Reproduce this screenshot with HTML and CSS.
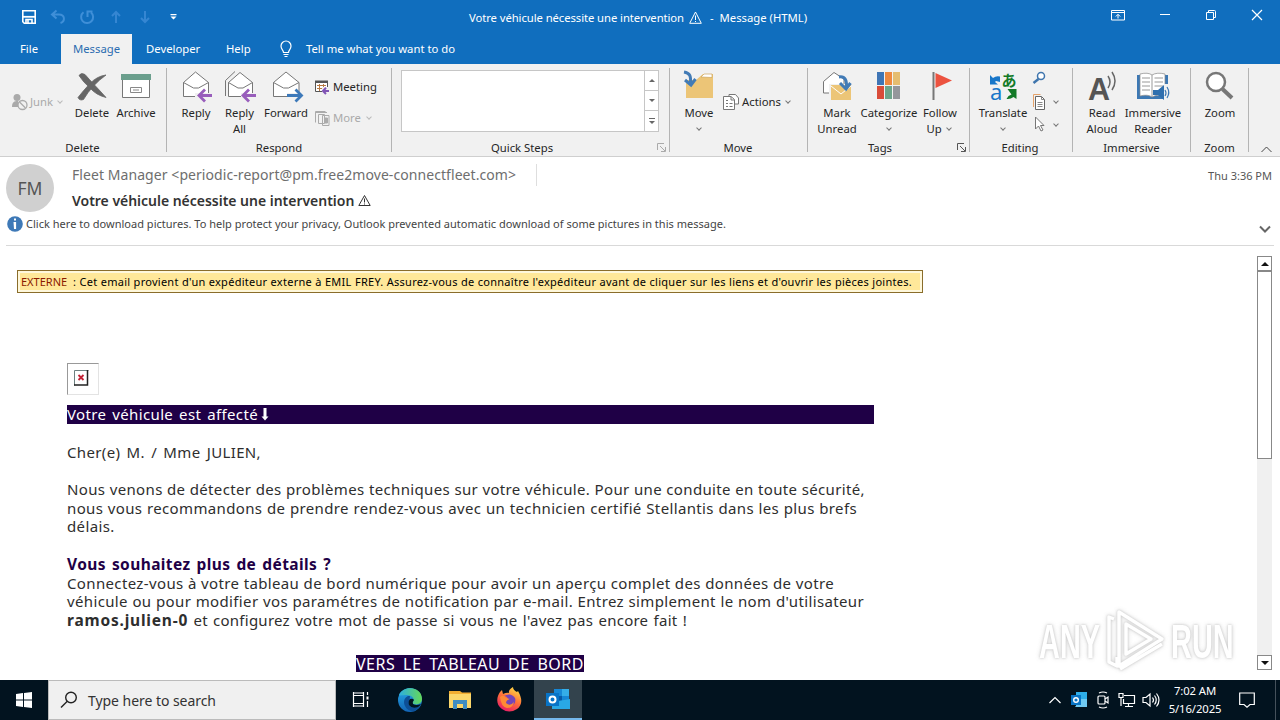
FILE: index.html
```html
<!DOCTYPE html>
<html lang="fr">
<head>
<meta charset="utf-8">
<title>Votre véhicule nécessite une intervention - Message (HTML)</title>
<link rel="stylesheet" href="styles.css">
</head>
<body>
<div class="window">
  <header class="titlebar">
    <div class="quick">
      <svg width="16" height="16" viewBox="0 0 16 16" fill="none" stroke="#fff" stroke-width="1.6"><path d="M1.8 1.800h12.400v12.400H3.300L1.800 12.700z"/><path d="M2 7.800h12" stroke-width="1.800"/><path d="M5 14v-3.500h6V14M7 11v3"/></svg>
      <svg width="16" height="16" viewBox="0 0 16 16" fill="none" stroke="#3f8fd8" stroke-width="2"><path d="M6.500 1.500L2 5.500l4.500 4M2.500 5.500H9c6 0 6.500 7 1.500 8.500"/></svg>
      <svg width="16" height="16" viewBox="0 0 16 16" fill="none" stroke="#3f8fd8" stroke-width="2"><path d="M4.500 3.300A6 6 0 1 0 12 3.500M8.500 8V2.500h5"/></svg>
      <svg width="16" height="16" viewBox="0 0 16 16" fill="none" stroke="#3586d2" stroke-width="2"><path d="M8 14V3M4 7l4-4 4 4"/></svg>
      <svg width="16" height="16" viewBox="0 0 16 16" fill="none" stroke="#3586d2" stroke-width="2"><path d="M8 2v11M4 9l4 4 4-4"/></svg>
      <svg width="16" height="16" viewBox="0 0 16 16" fill="#fff"><path d="M4.500 5h6v1.200h-6zM4.500 7.500h6l-3 3z"/></svg>
    </div>
    <div class="title"><span>Votre véhicule nécessite une intervention</span><svg width="13" height="13" viewBox="0 0 13 13" fill="none" stroke="#fff"><path d="M6.500 1L12.300 12.300H.7zM6.500 4.500v4.500M6.500 10v1"/></svg><span>-&nbsp; Message (HTML)</span></div>
    <div class="controls">
      <svg width="14" height="12" viewBox="0 0 14 12" fill="none" stroke="#fff"><path d="M.5 1.500h13v9.500H.5zM.5 3.500h13M7 9.500V5.500M4.800 7.500L7 5.300l2.200 2.200"/></svg>
      <svg width="12" height="12" viewBox="0 0 12 12" stroke="#fff"><path d="M1 5.500h10"/></svg>
      <svg width="12" height="12" viewBox="0 0 12 12" fill="none" stroke="#fff"><path d="M1.500 3.500h7v7h-7zM3.500 3V1.500H9.500q1 0 1 1V8.500H9"/></svg>
      <svg width="12" height="12" viewBox="0 0 12 12" stroke="#fff" stroke-width="1.200"><path d="M1 1l10 10M11 1L1 11"/></svg>
    </div>
  </header>
  <nav class="tabs">
    <a class="file">File</a><a class="active">Message</a><a class="dev">Developer</a><a class="help">Help</a>
    <svg width="14" height="18" viewBox="0 0 14 18" fill="none" stroke="#fff" stroke-width="1.200"><path d="M4.500 12.500c0-2.500-2.500-3-2.500-6.500a5 5 0 0 1 10 0c0 3.500-2.500 4-2.500 6.500zM4.500 14.500h5M5.500 16.500h3"/></svg>
    <a class="tell">Tell me what you want to do</a>
  </nav>

  <section class="ribbon">
    <div class="group g-delete">
      <div class="tools">
        <div class="row junk"><svg width="17" height="18" viewBox="0 0 17 18"><circle cx="6" cy="4.500" r="3.500" fill="#aaa"/><path d="M1 14c0-5 2-6 6-6v6z" fill="#aaa"/><circle cx="11.500" cy="12" r="4.500" fill="#f1f1f1" stroke="#aaa" stroke-width="1.300"/><path d="M8.500 9l6 6" stroke="#aaa" stroke-width="1.300"/></svg><span>Junk</span><i class="caret"></i></div>
        <div class="big w44"><svg width="30" height="30" viewBox="0 0 30 30" fill="#666"><path d="M2 3.500Q4 0 8 2.500c6 7 13 14 21 23Q19 23 13 16 6 10 2 3.500z" stroke="#666" stroke-width=".8"/><path d="M29 3Q20 4 12.500 12 6 19 1 25.500q1.500 3.500 5.500 2Q15 13 29 3z" stroke="#666" stroke-width=".8"/></svg><span>Delete</span></div>
        <div class="big w44"><svg width="30" height="30" viewBox="0 0 30 30"><path d="M1.500 8v17.500h27V8" fill="#fff" stroke="#777"/><path d="M0 2h30v6H0z" fill="#6b9f8d"/><path d="M9.500 15.500h11v5h-11zM12 18h6" fill="none" stroke="#888"/></svg><span>Archive</span></div>
      </div>
      <div class="label">Delete</div>
    </div>
    <div class="group g-respond">
      <div class="tools">
        <div class="big w44"><svg width="30" height="30" viewBox="0 0 30 30" fill="none"><path d="M2.500 10.500L14.500 0 27.500 10.500V24.500h-25z" fill="#fff" stroke="#777"/><path d="M2.500 10.500l10 5.500h5l10-5.500" stroke="#777"/><path d="M14 21h18v9H14z" fill="#f1f1f1"/><path d="M31 23.500H18M24 17.500l-6 6 6 6" stroke="#985dbb" stroke-width="2.800"/></svg><span>Reply</span></div>
        <div class="big w43"><svg width="32" height="30" viewBox="0 0 32 30" fill="none"><path d="M1.500 24V8.500L11 -.5" stroke="#777"/><path d="M4.500 10.500L16 .5l12.500 10V24.500h-24z" fill="#fff" stroke="#777"/><path d="M4.500 10.500l9.500 5.500h5l9.500-5.500" stroke="#777"/><path d="M17 21h15v9H17z" fill="#f1f1f1"/><path d="M32 23.500H19M25 17.500l-6 6 6 6" stroke="#985dbb" stroke-width="2.800"/></svg><span>Reply<br>All</span></div>
        <div class="big w50"><svg width="30" height="30" viewBox="0 0 30 30" fill="none"><path d="M2.500 10.500L15 0 28 10.500V24.500H2.500z" fill="#fff" stroke="#777"/><path d="M2.500 10.500l10 5.500h5L28 10.500" stroke="#777"/><path d="M16 21h15v9H16z" fill="#f1f1f1"/><path d="M16 23.500h14M24.500 17.500l6 6-6 6" stroke="#3d79b9" stroke-width="2.800"/></svg><span>Forward</span></div>
        <div class="stack meet">
          <div class="row"><svg width="16" height="16" viewBox="0 0 16 16" fill="none"><path d="M1.500 2.500h12v10h-12z" stroke="#555" fill="#fff"/><path d="M1 1.500h13v2.500H1z" fill="#555"/><path d="M3 6.500h9M3 9.500h6M5.500 5v7M9.500 5v4" stroke="#b97a43"/><path d="M8 8h8v8H8z" fill="#f1f1f1"/><path d="M15 12H9M12 8.800L9 12l3 3" stroke="#8054b5" stroke-width="2"/></svg><span>Meeting</span></div>
          <div class="row gray"><svg width="16" height="16" viewBox="0 0 16 16" fill="none" stroke="#aaa"><path d="M1.500 12.500v-11h10M1 2.500h12"/><path d="M4.500 4.500h6v9h-6zM8.500 5.500h6.500v10H8.500z" fill="#f1f1f1"/><path d="M10.500 8h3v5h-3z" fill="#aaa"/></svg><span>More</span><i class="caret"></i></div>
        </div>
      </div>
      <div class="label">Respond</div>
    </div>
    <div class="group g-quick">
      <div class="gallery"><div class="canvas"></div><div class="spin"><i class="up"></i><i class="down"></i><i class="down bar"></i></div></div>
      <div class="label">Quick Steps</div>
      <svg class="launch" width="9" height="9" viewBox="0 0 9 9" fill="none" stroke="#aaa"><path d="M.5 7V.5H7M3 3l5 5M8.500 4v4.500H4"/></svg>
    </div>
    <div class="group g-move">
      <div class="tools">
        <div class="big w50"><svg width="32" height="30" viewBox="0 0 32 30"><path d="M3 8h10l7-6h10v24H3z" fill="#ecc577"/><path d="M18 5l3-3h8v3.500z" fill="#fff" stroke="#cba55c" stroke-width=".7"/><path d="M1 0c6 1 7 4 6.500 11M2 8l6 5 4.500-6" fill="none" stroke="#427bb6" stroke-width="3"/></svg><span>Move<br><i class="caret"></i></span></div>
        <div class="row act"><svg width="17" height="16" viewBox="0 0 17 16" fill="none" stroke="#777"><path d="M6 2V.5h6.500L15.500 4v6H12" fill="#fff"/><path d="M.5 2.500H8l3.500 3V15.500H.5z" fill="#fff"/><path d="M3 6.500h2M3 9.500h2M3 12.500h2M6.500 9.500h3M6.500 12.500h3" /><path d="M8 3v3h3"/></svg><span>Actions</span><i class="caret"></i></div>
      </div>
      <div class="label">Move</div>
    </div>
    <div class="group g-tags">
      <div class="tools">
        <div class="big w50"><svg width="30" height="30" viewBox="0 0 30 30" fill="none"><path d="M1.500 21V9.500L12 .5l10 6.500v14z" fill="#fff" stroke="#777"/><path d="M7 12h20v10H7z" fill="#f1f1f1"/><path d="M9 13h20v15H9z" fill="#ecc577"/><path d="M9 14l10 8 10-8" stroke="#fff"/><path d="M17 5c6-1 8 3 7.500 11M18 11l6 6 4.500-6" stroke="#427bb6" stroke-width="3"/></svg><span>Mark<br>Unread</span></div>
        <div class="big w54"><svg width="30" height="30" viewBox="0 0 30 30"><path d="M3 0h7v13H3z" fill="#3f75b5"/><path d="M11 0h7v13h-7z" fill="#ee893f"/><path d="M19 0h7v13h-7z" fill="#e5bd70"/><path d="M3 14h7v13H3z" fill="#d94c39"/><path d="M11 14h7v13h-7z" fill="#6da58b"/><path d="M19 14h7v13h-7z" fill="#94969b"/></svg><span>Categorize<br><i class="caret"></i></span></div>
        <div class="big w48"><svg width="30" height="30" viewBox="0 0 30 30"><path d="M7.500 0h2v28h-2z" fill="#777"/><path d="M10.500 1L27 8.500 10.500 16z" fill="#ec5340"/></svg><span>Follow<br>Up <i class="caret"></i></span></div>
      </div>
      <div class="label">Tags</div>
      <svg class="launch" width="9" height="9" viewBox="0 0 9 9" fill="none" stroke="#555"><path d="M.5 7V.5H7M3 3l5 5M8.500 4v4.500H4"/></svg>
    </div>
    <div class="group g-edit">
      <div class="tools">
        <div class="big w58"><svg width="30" height="30" viewBox="0 0 30 30"><path d="M2 3l3 3q3-2.500 7-1.500v5.500l-4-1-1 1 3 2.500H2z" fill="#1876c9"/><path d="M28.500 17v10l-3-2q-3 2.500-7 2l2-3 3-1.500-4-5.500z" fill="#137a27"/><text x="2" y="27.500" class="lat">a</text><text x="13.500" y="14" class="kana">あ</text></svg><span>Translate<br><i class="caret"></i></span></div>
        <div class="stack edit">
          <div class="row"><svg width="16" height="16" viewBox="0 0 16 16" fill="none" stroke="#3f75ad"><circle cx="9" cy="5" r="3.500" fill="#fff" stroke-width="1.500"/><path d="M6.500 8l-5 4" stroke-width="2.500"/></svg></div>
          <div class="row"><svg width="16" height="16" viewBox="0 0 16 16" fill="none"><path d="M1.500 13V.5h7" stroke="#e6a36a"/><path d="M3.500 2.500h6l3 3v10h-9z" fill="#fff" stroke="#666"/><path d="M9.500 2.500v3h3M5.500 8.500h5M5.500 10.500h5M5.500 12.500h5" stroke="#888"/></svg><i class="caret"></i></div>
          <div class="row"><svg width="16" height="16" viewBox="0 0 16 16" fill="#fff" stroke="#777"><path d="M3.500 0v12l3-3 2.500 5 2-1-2.500-4.500h3.500z"/></svg><i class="caret"></i></div>
        </div>
      </div>
      <div class="label">Editing</div>
    </div>
    <div class="group g-imm">
      <div class="tools">
        <div class="big w44"><svg width="30" height="30" viewBox="0 0 30 30" fill="none" stroke="#666"><text x="1" y="27.500" class="bigA" textLength="22" lengthAdjust="spacingAndGlyphs">A</text><path d="M21 4q4 6 0 12" stroke-width="1.500"/><path d="M25 0q6 9 0 18" stroke-width="1.500"/></svg><span>Read<br>Aloud</span></div>
        <div class="big w58"><svg width="34" height="30" viewBox="0 0 34 30" fill="none"><path d="M1 3h31v24H1z" fill="#3c78b4"/><path d="M4 2q8-2 12 1 5-3 13-1v22q-8-2-13 1-4-3-12-1z" fill="#fff" stroke="#888" stroke-width=".7"/><path d="M16 3v22M6 6h8M6 10h8M6 14h8M6 18h8M18.500 6H27M18.500 10H27M18.500 14H27" stroke="#999"/><path d="M28 12h6v17h-6z" fill="#f1f1f1"/><path d="M17 18h5l6-5v15l-6-5h-5z" fill="#2f6fae"/><path d="M29 18q2 3 0 6M31 15q3.500 5.500 0 11" stroke="#3c78b4" stroke-width="1.200"/></svg><span>Immersive<br>Reader</span></div>
      </div>
      <div class="label">Immersive</div>
    </div>
    <div class="group g-zoom">
      <div class="tools"><div class="big w44"><svg width="30" height="30" viewBox="0 0 30 30" fill="none" stroke="#777"><circle cx="11" cy="10" r="9" fill="#fff" stroke-width="2.500"/><path d="M17.500 17l9.500 9" stroke-width="4"/></svg><span>Zoom</span></div></div>
      <div class="label">Zoom</div>
    </div>
    <div class="collapse"><svg width="11" height="7" viewBox="0 0 11 7" fill="none" stroke="#444"><path d="M.5 6L5.500 1l5 5"/></svg></div>
  </section>

  <section class="head">
    <div class="sender">
      <div class="avatar">FM</div>
      <div class="who">
        <div class="from"><span>Fleet Manager &lt;periodic-report@pm.free2move-connectfleet.com&gt;</span><i></i></div>
        <div class="subject"><span>Votre véhicule nécessite une intervention</span><svg width="13" height="13" viewBox="0 0 13 13" fill="none" stroke="#333"><path d="M6.500 1.500L12.200 11.500H.8zM6.500 4.500V8.500M6.500 9.500v1"/></svg></div>
      </div>
      <div class="time">Thu 3:36 PM</div>
    </div>
    <div class="info">
      <svg width="16" height="16" viewBox="0 0 16 16"><circle cx="8" cy="8" r="7.800" fill="#3e79b7"/><path d="M7 2.500h2v2H7zM6.500 6h2.600v7H7z" fill="#fff"/></svg>
      <span>Click here to download pictures. To help protect your privacy, Outlook prevented automatic download of some pictures in this message.</span>
      <svg class="expand" width="12" height="8" viewBox="0 0 12 8" fill="none" stroke="#666" stroke-width="2"><path d="M1 1.500l5 5 5-5"/></svg>
    </div>
  </section>

  <main class="mail">
    <div class="page">
      <div class="warn"><p><b>EXTERNE</b><span>: Cet email provient d'un expéditeur externe à EMIL FREY. Assurez-vous de connaître l'expéditeur avant de cliquer sur les liens et d'ouvrir les pièces jointes.</span></p></div>
      <div class="missing"><svg width="15" height="16" viewBox="0 0 15 16" fill="none"><path d="M.5 15.500V.5H14.500" stroke="#6d8080"/><path d="M13.500 0v15H0" stroke="#222" stroke-width="1.500"/><path d="M4.500 5l5 5M9.500 5l-5 5" stroke="#c22236" stroke-width="1.800"/></svg></div>
      <article>
        <p class="banner"><span class="l0">Votre véhicule est affecté</span><svg width="8" height="14" viewBox="0 0 8 14" fill="#fff"><path d="M2.500 0h3v8.500H7.500L4 12.500.5 8.500h2z"/></svg></p>
        <p class="l1">Cher(e) M. / Mme JULIEN,</p>
        <p class="l2">Nous venons de détecter des problèmes techniques sur votre véhicule. Pour une conduite en toute sécurité,</p>
        <p class="l3">nous vous recommandons de prendre rendez-vous avec un technicien certifié Stellantis dans les plus brefs</p>
        <p class="l4">délais.</p>
        <p class="l5">Vous souhaitez plus de détails ?</p>
        <p class="l6">Connectez-vous à votre tableau de bord numérique pour avoir un aperçu complet des données de votre</p>
        <p class="l7">véhicule ou pour modifier vos paramétres de notification par e-mail. Entrez simplement le nom d'utilisateur</p>
        <p class="l8"><b>ramos.julien-0</b> et configurez votre mot de passe si vous ne l'avez pas encore fait !</p>
        <p class="cta">VERS LE TABLEAU DE BORD</p>
      </article>
    </div>
    <div class="scroll"><i class="btn up"></i><div class="thumb"></div><i class="btn down"></i></div>
  </main>

  <footer class="taskbar">
    <div class="start"><svg width="16" height="16" viewBox="0 0 16 16" fill="#fff"><path d="M0 2l7-1v6.500H0zM8 .9L16 0v7.500H8zM0 8.500h7V15l-7-1zM8 8.500h8V16l-8-1z"/></svg></div>
    <div class="search"><svg width="18" height="18" viewBox="0 0 18 18" fill="none" stroke="#222" stroke-width="1.400"><circle cx="11" cy="6.500" r="5.300"/><path d="M7.300 10.300L1 16.500"/></svg><span>Type here to search</span></div>
    <div class="apps">
      <div><svg width="18" height="18" viewBox="0 0 18 18" fill="none" stroke="#fff" stroke-width="1.200"><path d="M1.500 4.500h10v8h-10zM1.500 1v3.500M11.500 1v3.500M1.500 12.500V16M11.500 12.500V16M1.500 2h10M1.500 15h10M15.500 1v3M15.500 10v6"/><path d="M14.500 5.500h2v3h-2z" fill="#fff" stroke="none"/></svg></div>
      <div><svg width="26" height="26" viewBox="0 0 26 26"><defs><linearGradient id="e1" x1="0" x2="1"><stop offset="0" stop-color="#2daedf"/><stop offset="1" stop-color="#65d858"/></linearGradient><linearGradient id="e2" x1="0" y1="0" x2="0" y2="1"><stop offset="0" stop-color="#26a9e6"/><stop offset="1" stop-color="#1264b5"/></linearGradient></defs><circle cx="13" cy="13" r="12" fill="url(#e2)"/><path d="M2 8C6-2 25-1 25 12c0 5-6 7-10 4 4-4 0-8-5-8-4 0-7 1-8 0z" fill="url(#e1)"/><path d="M11 9c-7 3-4 14 4 15q4 1 8-5-7 3-10-2-1-4 0-8z" fill="#0d4f96"/><path d="M13 12q3-1 4 1-2 2-1 4 3 2 8 0-1 2-3 3-6 2-9-2-1-4 1-6z" fill="#02151f"/></svg></div>
      <div><svg width="24" height="24" viewBox="0 0 24 24"><path d="M1 3h11l2 1.500h9V20H1z" fill="#f2ae32"/><path d="M1 6h22v14H1z" fill="#fbd76b"/><path d="M5 12h14v9h-4v-5H9v5H5z" fill="#3f8ec3"/></svg></div>
      <div><svg width="26" height="26" viewBox="0 0 26 26"><defs><linearGradient id="f1" x1=".8" y1="0" x2=".3" y2="1"><stop offset="0" stop-color="#ffe145"/><stop offset=".5" stop-color="#ff7139"/><stop offset="1" stop-color="#e81b67"/></linearGradient></defs><path d="M4 5l2-2 1 4q4-2 6-1-1-3 4-6 0 3 4 5l1-1q7 12-1 18-8 5-15 0C-1 17 1 9 4 5z" fill="url(#f1)"/><path d="M8 9q7-4 11 2 2 7-6 8-6-2-4-6l3-1q-1-3-4-3z" fill="#7545b8"/><path d="M4 10q4-3 6 1l4 1q-4 1-4 4 4 4 8-1-1 6-7 6-6-1-7-11z" fill="#ff8a35"/></svg></div>
      <div class="current"><svg width="26" height="26" viewBox="0 0 26 26"><path d="M9 3h15v14H9z" fill="#1687d6"/><path d="M17 3h7v7h-7z" fill="#35aee8"/><path d="M9 10h8v8H9z" fill="#085ba8"/><path d="M7 16l18-3v10H7z" fill="#29a8e5"/><path d="M1 7h13v13H1z" fill="#0874c7"/><circle cx="7.500" cy="13.500" r="3" fill="none" stroke="#fff" stroke-width="2"/></svg></div>
    </div>
    <div class="tray">
      <svg width="14" height="14" viewBox="0 0 14 14" fill="none" stroke="#fff" stroke-width="1.200"><path d="M.5 10L6 4.500l5.500 5.500"/></svg>
      <svg width="16" height="16" viewBox="0 0 16 16"><path d="M5 0h11v15H5z" fill="#2eaee9"/><path d="M10 7h6v8H4z" fill="#70c9f1"/><path d="M0 3h10v10H0z" fill="#0873c4"/><circle cx="5" cy="8" r="2.300" fill="none" stroke="#fff" stroke-width="1.400"/></svg>
      <svg width="14" height="18" viewBox="0 0 14 18" fill="none" stroke="#fff" stroke-width="1.200"><rect x="3" y="5" width="7" height="8" rx="1"/><path d="M10 8l3-2v6l-3-2M4 2q4-2 8 0M4 16q4 2 8 0"/></svg>
      <svg width="18" height="16" viewBox="0 0 18 16" fill="none" stroke="#fff" stroke-width="1.200"><path d="M7 3.500h10.500v8H6.500V7M11.500 11.500v3M8 14.500h8M2 1.500h4v4H2zM4 5.500V14"/></svg>
      <svg width="18" height="16" viewBox="0 0 18 16" fill="none" stroke="#fff" stroke-width="1.200"><path d="M0 5.500h3l4-3.500v12l-4-3.500H0zM9.500 5.500q2 2.500 0 5M11.500 3.500q3.500 4.500 0 9M13.500 1.500q5 6.500 0 13"/></svg>
      <div class="clock"><span>7:02 AM</span><span>5/16/2025</span></div>
      <svg width="16" height="16" viewBox="0 0 16 16" fill="none" stroke="#fff" stroke-width="1.200"><path d="M.7 1h14.600v11.500H11L8 15.300 5 12.500H.7z"/></svg>
      <i class="peek"></i>
    </div>
  </footer>

  <div class="watermark">
    <span>ANY</span>
    <svg width="60" height="66" viewBox="0 0 60 66" fill="none" stroke="#fff" stroke-width="3.500" stroke-linejoin="round"><path d="M8 11L3 9v45l8 4v-9M13 4l43 27-43 27zM20 16l25 15-25 15zM56 36L14 61"/></svg>
    <span>RUN</span>
  </div>
</div>
</body>
</html>
```
FILE: styles.css
```css
* { box-sizing: border-box; }
body { margin: 0; font-family: "Noto Sans", "Open Sans", sans-serif; font-size: 11.3px; color: #262626; }
p { margin: 0; }
svg { display: block; flex: none; overflow: visible; }
.window { position: relative; width: 1280px; height: 720px; overflow: hidden; background: #fff; display: flex; flex-direction: column; }

.titlebar { height: 34px; background: #106ebe; color: #fff; display: grid; grid-template-columns: 469px 1fr auto; align-items: center; flex: none; }
.quick { display: flex; gap: 13px; padding-left: 21px; }
.title { display: flex; align-items: center; gap: 5px; white-space: nowrap; letter-spacing: -.08px; }
.title svg { margin: 1px 0 0; }
.title span:last-child { margin-left: 3px; letter-spacing: 0; }
.controls { display: flex; align-items: center; gap: 34px; padding: 0 17px 4px 0; }
.tabs { height: 30px; background: #106ebe; color: #fff; display: flex; align-items: center; flex: none; white-space: nowrap; }
.tabs a { height: 30px; line-height: 29px; }
.file { width: 61px; padding-left: 20px; }
.active { width: 71px; text-align: center; background: #f1f1f1; color: #2b6cb0; }
.dev { width: 94px; padding-left: 14px; }
.help { width: 53px; }
.tell { padding-left: 13px; }

.ribbon { height: 93px; background: #f1f1f1; border-bottom: 1px solid #cfcfcf; display: flex; flex: none; line-height: 16px; white-space: nowrap; }
.group { position: relative; height: 92px; padding-top: 6px; display: flex; flex-direction: column; justify-content: space-between; }
.group::after { content: ""; position: absolute; right: 0; top: 4px; width: 1px; height: 84px; background: #b4b4b4; }
.tools { display: flex; height: 66px; }
.label { height: 16px; text-align: center; }
.g-delete { width: 167px; }
.g-delete .label { padding-right: 2px; }
.g-respond { width: 225px; padding-left: 7px; }
.g-respond .label { padding-right: 8px; }
.g-quick { width: 278px; }
.g-quick .label { padding-right: 18px; }
.g-move { width: 138px; padding-left: 4px; }
.g-move .label { padding-right: 6px; }
.g-tags { width: 162px; padding-left: 4px; }
.g-tags .label { padding-right: 22px; }
.g-edit { width: 103px; padding-left: 4px; }
.g-edit .label { padding-right: 7px; }
.g-imm { width: 118px; padding-left: 7px; }
.g-imm .label { padding-right: 8px; }
.g-zoom { width: 58px; padding-left: 7px; }
.g-zoom .label { padding-right: 8px; }
.big { display: flex; flex-direction: column; align-items: center; text-align: center; gap: 3px; padding-top: 2px; }
.big span { display: block; }
.w43 { width: 43px; } .w44 { width: 44px; } .w48 { width: 48px; } .w50 { width: 50px; }
.w54 { width: 54px; } .w58 { width: 58px; }
.row { display: flex; align-items: center; gap: 3px; height: 23px; }
.junk { width: 70px; padding-left: 11px; gap: 2px; margin-top: 20px; color: #aaa; }
.gray { color: #aaa; }
.act { margin-top: 20px; margin-left: -1px; gap: 2px; }
.stack { display: flex; flex-direction: column; }
.meet { padding: 5px 0 0 3px; gap: 8px; }
.edit { margin: -3px 0 0 0; }
.caret { display: inline-block; width: 4px; height: 4px; border: solid #777; border-width: 0 1px 1px 0; transform: rotate(45deg); margin: 0 2px 2px 3px; }
.big .caret { margin: 0 3px 3px 2px; }
.junk .caret, .gray .caret { border-color: #bbb; }
.gallery { margin-left: 9px; width: 258px; height: 62px; display: flex; background: #fff; border: 1px solid #c6c6c6; }
.canvas { flex: 1; }
.spin { width: 14px; border-left: 1px solid #c6c6c6; display: grid; grid-template-rows: 1fr 1fr 1fr; }
.spin i { display: flex; align-items: center; justify-content: center; border-bottom: 1px solid #c6c6c6; flex-direction: column; gap: 2px; }
.spin i:last-child { border-bottom: 0; }
.spin i::after { content: ""; border: 3px solid transparent; border-top: 3px solid #666; border-bottom: 0; }
.spin .up::after { border: 3px solid transparent; border-bottom: 3px solid #666; border-top: 0; }
.spin .bar::before { content: ""; width: 6px; height: 1px; background: #666; }
.launch { position: absolute; right: 4px; bottom: 4px; }
.collapse { flex: 1; display: flex; align-items: flex-end; padding: 0 0 3px 12px; }

.head { height: 89px; margin: 0 6px; border-bottom: 1px solid #d9d9d9; flex: none; white-space: nowrap; }
.sender { display: flex; height: 57px; }
.avatar { width: 48px; height: 48px; margin-top: 7px; border-radius: 50%; background: #d0d0d0; color: #555; font-size: 17.5px; line-height: 49px; text-align: center; }
.who { padding: 7px 0 0 18px; flex: 1; }
.from { display: flex; height: 22px; line-height: 21px; font-size: 14px; letter-spacing: .068px; color: #6e6e6e; gap: 20px; }
.from i { width: 1px; background: #dedede; }
.subject { display: flex; align-items: center; gap: 4px; height: 29px; font-size: 14px; font-weight: 600; letter-spacing: -.02px; color: #333; }
.time { padding: 11px 2px 0 0; line-height: 16px; font-size: 11px; color: #555; }
.info { display: flex; align-items: center; gap: 3px; height: 20px; font-size: 11px; letter-spacing: .018px; color: #444; padding-left: 1px; }
.info span { margin-top: -2px; }
.expand { margin: 10px 3px 0 auto; }

.mail { flex: 1; display: flex; min-height: 0; }
.page { flex: 1; padding: 24px 0 0 17px; white-space: nowrap; }
.warn { width: 906px; height: 23px; border: 1px solid #8a6d2b; background: #fff8dc; padding: 2px; }
.warn p { height: 17px; background: #ffe89a; line-height: 18px; font-size: 11px; color: #000; display: flex; gap: 5px; padding-left: 1px; }
.warn b { font-weight: 400; color: #8b1a00; width: 47px; }
.warn span { width: 839px; text-align-last: justify; letter-spacing: .27px; }
.missing { width: 32px; height: 32px; margin: 70px 0 10px 50px; border: 1px solid #e3e3e3; border-top-color: #999; border-left-color: #999; padding: 6px; }
article { margin-left: 50px; width: 807px; font-size: 15px; line-height: 18.7px; letter-spacing: .36px; color: #2e2e2e; }
article p { text-align-last: justify; }
.banner { display: flex; align-items: center; gap: 3px; background: #1f0046; color: #fff; margin-bottom: 18.7px; height: 19px; }
.l0 { width: 191px; text-align-last: justify; }
.l1 { width: 194px; margin-bottom: 18.7px; }
.l2 { width: 798px; }
.l3 { width: 790px; }
.l4 { width: 49px; margin-bottom: 18.7px; }
.l5 { width: 264px; font-size: 15.5px; font-weight: 700; color: #1f0046; letter-spacing: .4px; }
.l6 { width: 767px; }
.l7 { width: 797px; }
.l8 { width: 620px; letter-spacing: .25px; }
.l8 b { font-size: 15.5px; letter-spacing: .8px; }
.cta { width: 228px; height: 17px; line-height: 18px; margin: 25px 0 0 289px; background: #1f0046; color: #fff; font-size: 16px; letter-spacing: .5px; }
.scroll { width: 15px; margin: 10px 8px 10px 0; background: #f0f0f0; display: flex; flex-direction: column; }
.btn { height: 15px; border: 1px solid #888; background: #fff; display: flex; align-items: center; justify-content: center; flex: none; }
.btn::after { content: ""; border: 4px solid transparent; }
.btn.up::after { border-bottom-color: #111; border-top: 0; }
.btn.down::after { border-top-color: #111; border-bottom: 0; }
.thumb { height: 188px; border: 1px solid #888; background: #fff; margin-bottom: auto; }

.taskbar { height: 40px; background: #02131f; color: #fff; display: flex; flex: none; white-space: nowrap; }
.start { width: 48px; display: flex; align-items: center; justify-content: center; }
.search { width: 288px; background: #f0f0f0; border: 1px solid #bbb; display: flex; align-items: center; gap: 10px; padding-left: 11px; color: #333; font-size: 14px; letter-spacing: -.05px; }
.apps { display: flex; }
.apps div { width: 49.5px; height: 40px; display: flex; align-items: center; justify-content: center; }
.apps .current { width: 48px; background: #33434d; border-bottom: 2px solid #76b9ed; }
.tray { margin-left: auto; display: flex; align-items: center; gap: 8px; }
.clock { width: 56px; margin: 0 8px 0 -2px; display: flex; flex-direction: column; text-align: center; line-height: 18px; font-size: 11.3px; letter-spacing: -.1px; align-items: center; }
.peek { width: 1px; height: 40px; background: #45515b; margin: 0 4px 0 12px; }

.watermark { position: absolute; left: 1039px; top: 608px; display: flex; align-items: center; gap: 5px; filter: drop-shadow(0 0 1px #aaa) drop-shadow(0 0 2px #ccc); color: #fff; opacity: .65; }
.watermark span { width: 62px; font: 700 49px/66px "Liberation Sans", sans-serif; transform: scaleX(.59); transform-origin: left; }
.lat { font: 22px "Noto Sans", sans-serif; fill: #1876c9; }
.kana { font: 700 15px "Noto Sans CJK JP", sans-serif; fill: #137a27; }
.bigA { font: 700 32px/1 "Liberation Sans", sans-serif; fill: #555; stroke: none; }
```
